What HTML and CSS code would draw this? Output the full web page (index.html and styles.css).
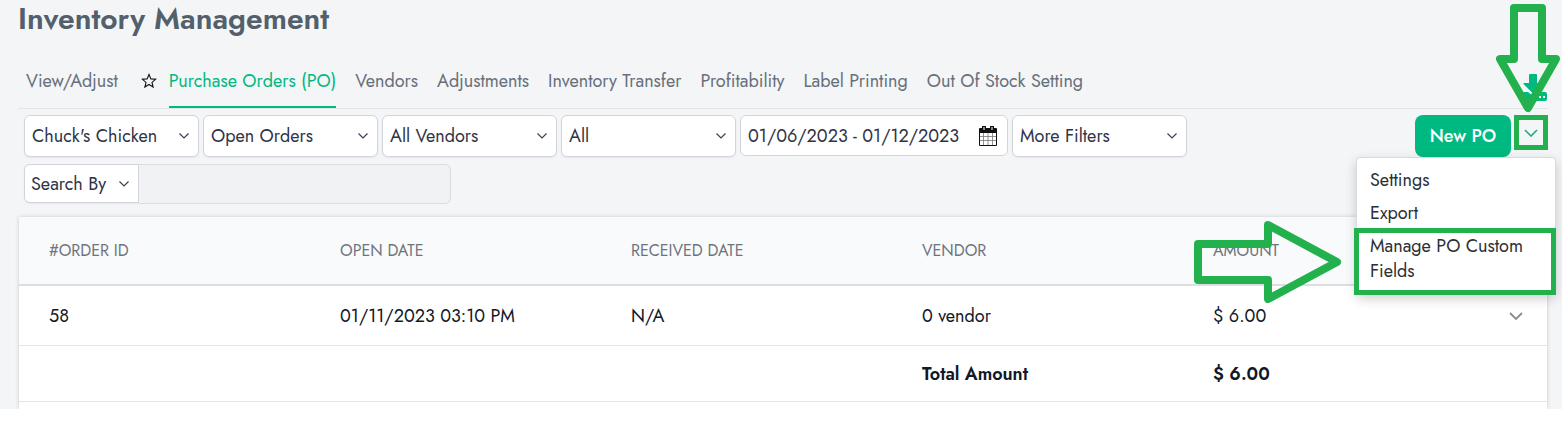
FILE: index.html
```
<!DOCTYPE html>
<html lang="en">
<head>
    <meta charset="UTF-8">
    <meta name="viewport" content="width=device-width, initial-scale=1.0">
    <title>Inventory Management</title>
    <link rel="stylesheet" href="styles.css">
</head>
<body>
    <main class="page">
        <h1>Inventory Management</h1>

        <!-- Tabs -->
        <nav class="tabs">
            <a class="tab" href="#">View/Adjust</a>
            <svg class="star" viewBox="0 0 16 16" width="16" height="16" aria-hidden="true">
                <path d="M8 1.500l1.900 4.400 4.700.4-3.600 3.100 1.100 4.600L8 11.500 3.900 14 5 9.400 1.400 6.300l4.700-.4z" fill="none" stroke="#111" stroke-width="1.100"/>
            </svg>
            <a class="tab active" href="#">Purchase Orders (PO)</a>
            <a class="tab" href="#">Vendors</a>
            <a class="tab" href="#">Adjustments</a>
            <a class="tab" href="#">Inventory Transfer</a>
            <a class="tab" href="#">Profitability</a>
            <a class="tab" href="#">Label Printing</a>
            <a class="tab" href="#">Out Of Stock Setting</a>
            <a class="download" href="#" aria-label="Download">
                <svg viewBox="0 0 28 27" width="28" height="27">
                    <path d="M10 0h6q1 0 1 1v8h5q1 0 .5 1l-9 9h-1l-9-9q-.5-1 .5-1h5V1q0-1 1-1z" fill="#00b981"/>
                    <path d="M2 18h6l5 4 5-4h7q2 0 2 2v5q0 2-2 2H2q-2 0-2-2v-5q0-2 2-2z" fill="#00b981"/>
                    <path d="M19 22h2v2h-2zM23 22h2v2h-2z" fill="#f3f5f7"/>
                </svg>
            </a>
        </nav>

        <!-- Filters -->
        <div class="toolbar">
            <div class="filters">
                <div class="select-box">
                    <select aria-label="Store"><option>Chuck's Chicken</option></select>
                    <svg class="chevron" viewBox="0 0 10 6"><path d="M.5.5L5 5 9.500.5"/></svg>
                </div>
                <div class="select-box">
                    <select aria-label="Order status"><option>Open Orders</option></select>
                    <svg class="chevron" viewBox="0 0 10 6"><path d="M.5.5L5 5 9.500.5"/></svg>
                </div>
                <div class="select-box">
                    <select aria-label="Vendor"><option>All Vendors</option></select>
                    <svg class="chevron" viewBox="0 0 10 6"><path d="M.5.5L5 5 9.500.5"/></svg>
                </div>
                <div class="select-box">
                    <select aria-label="Type"><option>All</option></select>
                    <svg class="chevron" viewBox="0 0 10 6"><path d="M.5.5L5 5 9.500.5"/></svg>
                </div>
                <div class="date-box">
                    <input type="text" aria-label="Date range" value="01/06/2023 - 01/12/2023">
                    <svg class="calendar" viewBox="0 0 18 20" width="18" height="20" aria-hidden="true">
                        <path d="M0 3q0-1 1-1h16q1 0 1 1v16q0 1-1 1H1q-1 0-1-1z" fill="#111"/>
                        <path d="M3 0h4v5H3zM11 0h4v5h-4z" fill="#111"/>
                        <path d="M4.500 1h1v3h-1zM12.500 1h1v3h-1z" fill="#fff"/>
                        <path d="M1 7h16v12H1z" fill="#fff"/>
                        <path d="M4.500 7v12M9 7v12M13.500 7v12M1 10.500h16M1 14.500h16" fill="none" stroke="#777" stroke-width=".8"/>
                    </svg>
                </div>
                <div class="select-box">
                    <select aria-label="More filters"><option>More Filters</option></select>
                    <svg class="chevron" viewBox="0 0 10 6"><path d="M.5.5L5 5 9.500.5"/></svg>
                </div>
            </div>

            <div class="actions">
                <button class="new-po" type="button">New PO</button>
                <button class="more" type="button" aria-label="More actions">
                    <svg viewBox="0 0 14 8" width="14" height="8"><path d="M1 1l6 6 6-6" fill="none" stroke="#22a97c" stroke-width="1.600"/></svg>
                </button>
                <svg class="arrow arrow-down" viewBox="0 0 64 110" width="64" height="110" aria-hidden="true">
                    <path d="M18 5h28v51h14L32 105 4 56h14z"/>
                </svg>

                <div class="menu">
                    <a href="#">Settings</a>
                    <a href="#">Export</a>
                    <a class="highlight" href="#">Manage PO Custom Fields</a>
                    <svg class="arrow arrow-right" viewBox="0 0 148 82" width="148" height="82" aria-hidden="true">
                        <path d="M4 23h70V4l69 37-69 37V59H4z"/>
                    </svg>
                </div>
            </div>
        </div>

        <div class="search">
            <div class="select-box search-by">
                <select aria-label="Search by"><option>Search By</option></select>
                <svg class="chevron" viewBox="0 0 10 6"><path d="M.5.5L5 5 9.500.5"/></svg>
            </div>
            <input type="text" aria-label="Search text">
        </div>

        <!-- Orders -->
        <div class="card">
            <table>
                <thead>
                    <tr>
                        <th>#ORDER ID</th>
                        <th>OPEN DATE</th>
                        <th>RECEIVED DATE</th>
                        <th>VENDOR</th>
                        <th>AMOUNT</th>
                        <th class="toggle"></th>
                    </tr>
                </thead>
                <tbody>
                    <tr>
                        <td>58</td>
                        <td>01/11/2023 03:10 PM</td>
                        <td>N/A</td>
                        <td>0 vendor</td>
                        <td>$ 6.00</td>
                        <td class="toggle">
                            <svg viewBox="0 0 14 8" width="14" height="8"><path d="M1 1l6 6 6-6" fill="none" stroke="#8c8c8c" stroke-width="1.800"/></svg>
                        </td>
                    </tr>
                    <tr class="total">
                        <td></td>
                        <td></td>
                        <td></td>
                        <td>Total Amount</td>
                        <td>$ 6.00</td>
                        <td class="toggle"></td>
                    </tr>
                </tbody>
            </table>
        </div>
    </main>
</body>
</html>
```
FILE: styles.css
```
* {
    margin: 0;
    padding: 0;
    box-sizing: border-box;
}

body {
    background: #fff;
    color: #111827;
    font-family: Jost, Lato, sans-serif;
    font-size: 18px;
    line-height: 24px;
}

input, select, button {
    font: inherit;
    color: inherit;
}

.page {
    background: #f3f5f7;
    padding: 0 14px 0 18px;
}

h1 {
    color: #535f6b;
    font-size: 30px;
    font-weight: 600;
    line-height: 38px;
}

/* Tabs */
.tabs {
    display: flex;
    align-items: center;
    gap: 19px;
    height: 54px;
    margin-top: 17px;
    padding-left: 8px;
    border-bottom: 1px solid #e2e4e8;
}

.tab {
    display: flex;
    align-items: center;
    height: 53px;
    border-bottom: 2px solid transparent;
    color: #686f7b;
    text-decoration: none;
    white-space: nowrap;
}

.tab.active {
    border-color: #00b981;
    color: #00b981;
}

.star {
    margin: 0 -7px 2px 4px;
}

.download {
    display: flex;
    margin-left: auto;
    padding-top: 12px;
}

/* Filters */
.toolbar {
    display: flex;
    justify-content: space-between;
    margin-top: 6px;
    padding-left: 6px;
}

.filters {
    display: flex;
    gap: 4px;
}

.select-box {
    display: grid;
    align-items: center;
    width: 175px;
    height: 42px;
    background: #fff;
    border: 1px solid #d1d5db;
    border-radius: 6px;
    box-shadow: 0 1px 2px rgba(0, 0, 0, 0.06);
    color: #2f3446;
}

.select-box select {
    grid-area: 1 / 1;
    width: 100%;
    height: 100%;
    padding: 0 28px 0 7px;
    appearance: none;
    background: transparent;
    border: none;
}

.chevron {
    grid-area: 1 / 1;
    justify-self: end;
    width: 10px;
    height: 6px;
    margin-right: 9px;
    fill: none;
    stroke: #374151;
    stroke-width: 1.2;
    pointer-events: none;
}

.date-box {
    display: flex;
    align-items: center;
    width: 268px;
    height: 41px;
    padding: 0 10px 0 7px;
    background: #fff;
    border: 1px solid #d1d5db;
    border-radius: 6px;
    color: #2f3446;
}

.date-box input {
    flex: 1;
    min-width: 0;
    border: none;
}

.search {
    display: flex;
    margin-top: 7px;
    padding-left: 6px;
}

.search-by {
    width: 115px;
    height: 39px;
    border-radius: 6px 0 0 6px;
}

.search-by select {
    padding: 0 20px 0 6px;
}

.search input {
    width: 312px;
    height: 40px;
    padding: 0 8px;
    background: #f0f2f4;
    border: 1px solid #d9dce0;
    border-left: none;
    border-radius: 0 6px 6px 0;
}

/* Actions and their menu */
.actions {
    position: relative;
    display: flex;
    align-items: flex-start;
    gap: 3px;
}

.new-po {
    width: 96px;
    height: 42px;
    background: #00b981;
    border: none;
    border-radius: 8px;
    color: #fff;
    font-weight: 500;
}

.more {
    width: 34px;
    height: 35px;
    background: transparent;
    border: 5px solid #22b14c;
    line-height: 0;
}

.menu {
    position: absolute;
    z-index: 2;
    top: 42px;
    right: -8px;
    width: 200px;
    padding-top: 6px;
    background: #fff;
    border: 1px solid #d8dade;
    border-radius: 4px;
    box-shadow: 0 4px 12px rgba(0, 0, 0, 0.18);
}

.menu a {
    display: block;
    padding: 4px 13px;
    color: #2b2f36;
    line-height: 25px;
    text-decoration: none;
}

.menu .highlight {
    margin: -2px -1px -1px -3px;
    padding: 1px 10px 6px 11px;
    border: 5px solid #22b14c;
}

.arrow {
    position: absolute;
    fill: none;
    stroke: #22b14c;
    stroke-width: 8;
    stroke-linejoin: round;
}

.arrow-down {
    z-index: 3;
    right: -12px;
    bottom: 44px;
}

.arrow-right {
    right: 213px;
    bottom: -9px;
}

/* Orders table */
.card {
    margin: 13px 1px 0;
    padding-bottom: 7px;
    background: #fff;
    box-shadow: 0 0 4px rgba(0, 0, 0, 0.18);
}

table {
    width: 100%;
    border-collapse: separate;
    border-spacing: 0;
    table-layout: fixed;
}

th, td {
    padding: 0 0 0 30px;
    border-bottom: 1px solid #e2e4e7;
    text-align: left;
}

th {
    height: 69px;
    background: #f9fafc;
    border-bottom: 2px solid #dcdee1;
    color: #6f747c;
    font-size: 16px;
    font-weight: 400;
}

td {
    height: 60px;
}

.total td {
    height: 56px;
    font-weight: 600;
}

.toggle {
    width: 73px;
    padding-left: 35px;
}

td.toggle {
    line-height: 0;
}
```
